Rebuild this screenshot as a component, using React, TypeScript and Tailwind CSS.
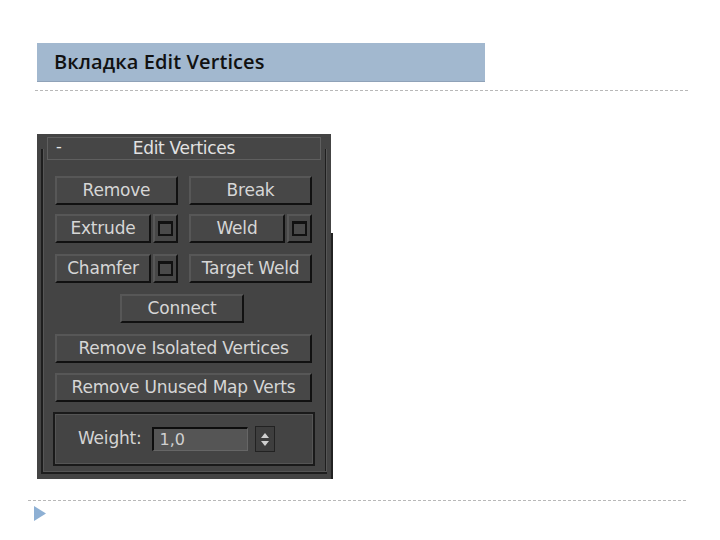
const font = { fontFamily: '"DejaVu Sans", "Liberation Sans", sans-serif' };

function MaxButton({ label, className = '' }: { label: string; className?: string }) {
  return (
    <div
      className={`h-[29px] flex items-center justify-center bg-[#474747] border-t-2 border-l-2 border-b-2 border-r-2 border-t-[#575757] border-l-[#575757] border-b-[#111] border-r-[#111] text-[#d6d6d6] text-[17px] tracking-[-0.2px] ${className}`}
    >
      {label}
    </div>
  );
}

function OptionBox() {
  return (
    <div className="w-[25px] h-[29px] flex items-center justify-center bg-[#474747] border-t-2 border-l-2 border-b-2 border-r-2 border-t-[#575757] border-l-[#575757] border-b-[#111] border-r-[#111]">
      <div className="w-[15px] h-[15px] border-2 border-[#111] bg-[#4a4a4a] border-t-[3px]" />
    </div>
  );
}

export default function App() {
  return (
    <div className="w-[720px] h-[540px] bg-white flex flex-col overflow-hidden">
      {/* slide header */}
      <div className="mt-[43px] ml-[37px] w-[448px] h-[39px] bg-[#a2b8cf] border-b border-[#8fa2b8] flex items-center pl-[17px]">
        <span
          className="text-[20px] font-semibold text-[#111] tracking-[0.1px]"
          style={{ fontFamily: '"Open Sans", "Liberation Sans", sans-serif' }}
        >
          Вкладка Edit Vertices
        </span>
      </div>
      <div className="mt-[8px] ml-[35px] w-[653px] border-t border-dashed border-[#b8b8b8]" />

      {/* 3ds Max rollout */}
      <div className="mt-[43px] ml-[37px] flex">
        <div className="w-[294px] h-[345px] bg-[#444] pt-[3px] pb-[5px] flex flex-col" style={font}>
          <div className="relative z-10 mx-[10px] h-[23px] border border-[#5f5f5f] bg-[#464646] flex items-center">
            <span className="pl-[8px] text-[#e6e6e6] text-[16px] leading-none -mt-[4px]">-</span>
            <span className="flex-1 text-center text-[#e2e2e2] text-[17px] tracking-[-0.3px] pr-[14px]">
              Edit Vertices
            </span>
          </div>
          <div className="-mt-[11px] mx-[4px] flex-1 border-l-2 border-r-2 border-b-2 border-[#1e1e1e] flex">
            <div className="flex-1 border-l border-r border-b border-[#565656] pl-[11px] pr-[11px] pt-[27px] flex flex-col">
              <div className="flex gap-[11px]">
                <MaxButton label="Remove" className="w-[123px]" />
                <MaxButton label="Break" className="w-[123px]" />
              </div>
              <div className="flex gap-[11px] mt-[9px]">
                <div className="flex gap-[2px]">
                  <MaxButton label="Extrude" className="w-[96px]" />
                  <OptionBox />
                </div>
                <div className="flex gap-[2px]">
                  <MaxButton label="Weld" className="w-[96px]" />
                  <OptionBox />
                </div>
              </div>
              <div className="flex gap-[11px] mt-[11px]">
                <div className="flex gap-[2px]">
                  <MaxButton label="Chamfer" className="w-[96px]" />
                  <OptionBox />
                </div>
                <MaxButton label="Target Weld" className="w-[123px]" />
              </div>
              <div className="flex justify-center mt-[11px] pr-[6px]">
                <MaxButton label="Connect" className="w-[124px]" />
              </div>
              <MaxButton label="Remove Isolated Vertices" className="w-[257px] mt-[11px]" />
              <MaxButton label="Remove Unused Map Verts" className="w-[257px] mt-[10px]" />

              {/* weight group */}
              <div className="mt-[10px] -ml-[2px] w-[262px] h-[54px] border-2 border-[#1a1a1a] flex">
                <div className="flex-1 border border-[#555] flex items-center pl-[22px]">
                  <span className="text-[#d4d4d4] text-[17px] tracking-[-0.2px]">Weight:</span>
                  <div className="ml-[10px] w-[96px] h-[24px] bg-[#555] border-t-2 border-l-2 border-[#0d0d0d] border-b border-r border-b-[#666] border-r-[#666] flex items-center pl-[6px]">
                    <span className="text-[#d0d0d0] text-[16px]">1,0</span>
                  </div>
                  <div className="ml-[7px] w-[20px] h-[26px] bg-[#3e3e3e] border border-[#222] flex flex-col items-center justify-center gap-[3px]">
                    <svg width="8" height="5" viewBox="0 0 8 5"><path d="M4 0 L8 5 L0 5 Z" fill="#d0d0d0" /></svg>
                    <svg width="8" height="5" viewBox="0 0 8 5"><path d="M0 0 L8 0 L4 5 Z" fill="#d0d0d0" /></svg>
                  </div>
                </div>
              </div>
            </div>
          </div>
        </div>
        <div className="mt-[99px] w-[2px] h-[246px] bg-[#222]" />
      </div>

      <div className="mt-[21px] ml-[28px] w-[658px] border-t border-dashed border-[#b8b8b8]" />
      <div className="mt-[5px] ml-[34px]">
        <svg width="12" height="15" viewBox="0 0 12 15">
          <path d="M0 0 L12 7.5 L0 15 Z" fill="#8eb0d4" />
        </svg>
      </div>
    </div>
  );
}
